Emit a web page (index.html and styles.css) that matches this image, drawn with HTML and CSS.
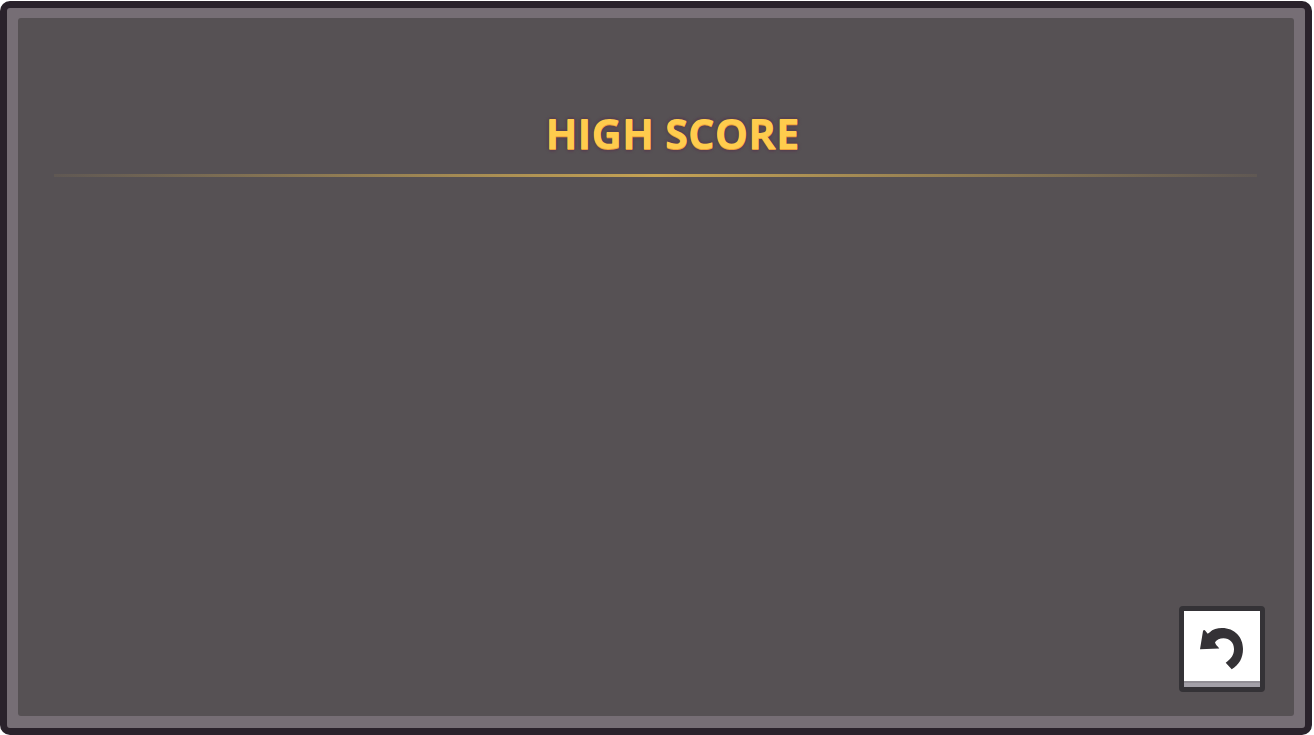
FILE: index.html
```html
<!DOCTYPE html>
<html lang="en">
<head>
<meta charset="utf-8">
<title>High Score</title>
<link rel="stylesheet" href="styles.css">
</head>
<body>
<div class="frame">
  <div class="bezel">
    <main class="panel">
      <header class="header">
        <h1 class="title">HIGH SCORE</h1>
      </header>
      <button class="back" type="button" aria-label="Back">
        <svg class="back-icon" viewBox="0 0 44 44" aria-hidden="true">
          <path d="M3 4 Q4 2.200 5.500 4 L7.700 6.700 L9.500 5.500 C13 2 17 1 22 1 C34.500 1 43 10 43 22 C43 31 39 38 31.700 42.300 L25.700 35.700 C31 32 34 28 34 22 C34 15.500 29.500 11.300 23.500 11.300 C19.500 11.300 17 12.500 15 15.300 C15.500 18 17.500 19 19.300 21.500 L0 22.300 Z"/>
        </svg>
      </button>
    </main>
  </div>
</div>
</body>
</html>
```
FILE: styles.css
```css
* {
  box-sizing: border-box;
}

body {
  margin: 0;
  background: #ffffff;
  font-family: "Open Sans", "Noto Sans", sans-serif;
}

.frame {
  display: flex;
  min-height: 100vh;
  padding: 1px 2px 0 0;
}

.bezel {
  display: flex;
  flex: 1;
  padding: 10px 11px 12px;
  border: 7px solid #2a222b;
  border-radius: 10px;
  background: #766e75;
}

.panel {
  display: flex;
  flex: 1;
  flex-direction: column;
  justify-content: space-between;
  padding: 87px 29px 24px 36px;
  border-radius: 3px;
  background: #565154;
}

.header {
  margin-right: 8px;
  padding: 0 0 13px 34px;
  border-bottom: 3px solid;
  border-image: linear-gradient(90deg, rgba(204, 168, 76, 0.08), #c5a354 50%, rgba(204, 168, 76, 0.08)) 1;
}

.title {
  margin: 0;
  color: #ffcc4d;
  font-size: 42px;
  font-weight: 700;
  line-height: 56px;
  text-align: center;
  text-shadow:
    0 1px 0 #ee9f3b,
    2px 0 2px #574451,
    -2px 0 2px #574451,
    0 -2px 2px #574451,
    0 3px 2px #574451;
}

.back {
  display: flex;
  align-items: center;
  justify-content: center;
  align-self: flex-end;
  width: 86px;
  height: 86px;
  padding: 0;
  border: 5px solid #343236;
  border-radius: 4px;
  background: linear-gradient(#ffffff 70px, #918e95 70px, #918e95 72px, #a3a0a8 72px);
  cursor: pointer;
}

.back-icon {
  width: 44px;
  height: 44px;
  fill: #343236;
}
```
